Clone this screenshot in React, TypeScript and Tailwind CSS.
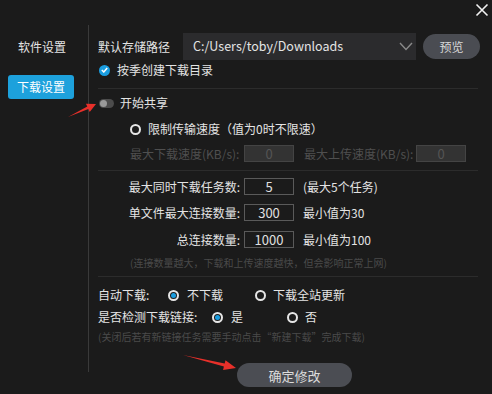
import type { ReactNode } from 'react'

const FONT = { fontFamily: '"Noto Sans CJK SC", "Noto Sans", sans-serif' }

function Radio({ checked }: { checked?: boolean }) {
  return (
    <span className="flex h-[11px] w-[11px] shrink-0 items-center justify-center rounded-full border-2 border-[#e6e6e6]">
      {checked && <span className="h-[5px] w-[5px] rounded-full bg-[#1a9de0]" />}
    </span>
  )
}

function NumBox({ value, disabled }: { value: string; disabled?: boolean }) {
  return (
    <div
      className={`flex h-[17px] w-[50px] items-center justify-center border text-[13px] ${
        disabled ? 'border-[#444] bg-[#333] text-[#555]' : 'border-[#5a5a5a] bg-[#1b1b1b] text-[#e0e0e0]'
      }`}
    >
      {value}
    </div>
  )
}

function LimitRow({ label, value, hint, mt }: { label: string; value: string; hint: string; mt: string }) {
  return (
    <div className={`flex h-[17px] items-center ${mt}`}>
      <span className="w-[146px] pr-[4px] text-right">{label}</span>
      <NumBox value={value} />
      <span className="ml-[9px]">{hint}</span>
    </div>
  )
}

function Divider({ mt }: { mt: string }) {
  return <div className={`h-px w-[380px] bg-[#2c2c2c] ${mt}`} />
}

function Row({ children, className }: { children: ReactNode; className: string }) {
  return <div className={`flex items-center ${className}`}>{children}</div>
}

export default function App() {
  return (
    <div
      className="relative flex h-[394px] w-[492px] overflow-hidden bg-[#1b1b1b] text-[12px] leading-none text-[#e4e4e4]"
      style={FONT}
    >
      {/* sidebar */}
      <div className="mt-[25px] flex h-[347px] w-[89px] shrink-0 flex-col items-start border-r border-[#3a3a3a]">
        <div className="mt-[16px] w-[84px] text-center">软件设置</div>
        <div className="ml-[8px] mt-[22px] flex h-[24px] w-[66px] items-center justify-center rounded-[3px] bg-[#1da1dc] text-white">
          下载设置
        </div>
      </div>

      {/* main panel */}
      <div className="flex flex-1 flex-col pl-[9px]">
        <Row className="mt-[33px] h-[27px]">
          <span className="w-[85px]">默认存储路径</span>
          <div className="flex h-[27px] w-[233px] items-center justify-between bg-[#2b2b2d] pl-[10px] pr-[3px] text-[12.5px]">
            <span>C:/Users/toby/Downloads</span>
            <svg width="14" height="9" viewBox="0 0 14 9">
              <path d="M1 1 L7 7.5 L13 1" fill="none" stroke="#8a8a8a" strokeWidth="1.4" />
            </svg>
          </div>
          <div className="ml-[7px] flex h-[25px] w-[57px] items-center justify-center rounded-full bg-[#4a4c52] text-[#d8d8d8]">
            预览
          </div>
        </Row>

        <Row className="mt-[4px] h-[12px]">
          <span className="ml-[1px] flex h-[11px] w-[11px] items-center justify-center rounded-full bg-[#1a9de0]">
            <svg width="7" height="6" viewBox="0 0 7 6">
              <path d="M0.8 3 L2.8 5 L6.2 1" fill="none" stroke="white" strokeWidth="1.5" />
            </svg>
          </span>
          <span className="ml-[7px]">按季创建下载目录</span>
        </Row>

        <Divider mt="mt-[12px]" />

        <Row className="mt-[8px] h-[12px]">
          <span className="relative ml-[1px] h-[9px] w-[15px] rounded-full bg-[#4c4c4c]">
            <span className="absolute left-[1px] top-[1px] h-[7px] w-[7px] rounded-full bg-[#9a9a9a]" />
          </span>
          <span className="ml-[6px]">开始共享</span>
        </Row>

        <Row className="ml-[32px] mt-[14px] h-[12px]">
          <Radio />
          <span className="ml-[7px]">限制传输速度（值为0时不限速）</span>
        </Row>

        <Row className="ml-[32px] mt-[10px] h-[17px] text-[#4f4f4f]">
          <span className="w-[114px]">最大下载速度(KB/s):</span>
          <NumBox value="0" disabled />
          <span className="ml-[10px] w-[112px]">最大上传速度(KB/s):</span>
          <NumBox value="0" disabled />
        </Row>

        <Divider mt="mt-[8px]" />

        <LimitRow label="最大同时下载任务数:" value="5" hint="(最大5个任务)" mt="mt-[7px]" />
        <LimitRow label="单文件最大连接数量:" value="300" hint="最小值为30" mt="mt-[9px]" />
        <LimitRow label="总连接数量:" value="1000" hint="最小值为100" mt="mt-[10px]" />

        <div className="ml-[32px] mt-[10px] text-[10px] text-[#4a4a4a]">(连接数量越大，下载和上传速度越快，但会影响正常上网)</div>

        <Divider mt="mt-[8px]" />

        <Row className="mt-[12px] h-[12px]">
          <span className="w-[70px]">自动下载:</span>
          <Radio checked />
          <span className="ml-[8px] w-[68px]">不下载</span>
          <Radio />
          <span className="ml-[7px]">下载全站更新</span>
        </Row>

        <Row className="mt-[10px] h-[12px]">
          <span className="w-[114px]">是否检测下载链接:</span>
          <Radio checked />
          <span className="ml-[8px] w-[56px]">是</span>
          <Radio />
          <span className="ml-[7px]">否</span>
        </Row>

        <div className="mt-[9px] text-[10px] text-[#4a4a4a]">(关闭后若有新链接任务需要手动点击“新建下载”完成下载)</div>

        <div className="ml-[139px] mt-[21px] flex h-[24px] w-[115px] items-center justify-center rounded-full bg-[#4b4d53] text-[13px] text-[#dcdcdc]">
          确定修改
        </div>
      </div>

      {/* close */}
      <svg className="absolute left-[475px] top-[3px]" width="14" height="14" viewBox="0 0 14 14">
        <path d="M1.5 1.5 L12.5 12.5 M12.5 1.5 L1.5 12.5" stroke="#f2f2f2" strokeWidth="1.6" />
      </svg>

      {/* annotation arrows */}
      <svg className="pointer-events-none absolute inset-0" width="492" height="394">
        <polygon
          points="68,117 87.3,106.6 85.9,103.7 96,104 89.7,111.9 88.4,109"
          fill="#e8302a"
        />
        <polygon
          points="183,355 224.7,363.6 225.5,360.2 236,368 223.1,370 223.9,366.6"
          fill="#e8302a"
        />
      </svg>
    </div>
  )
}
